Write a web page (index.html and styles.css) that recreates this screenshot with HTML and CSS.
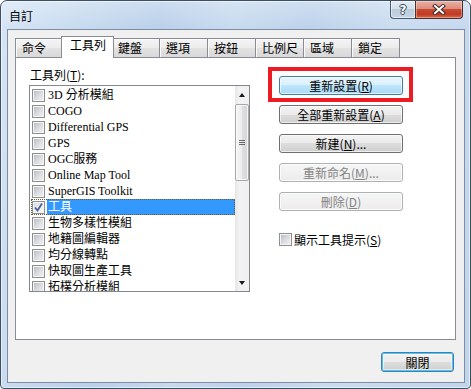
FILE: index.html
```html
<!DOCTYPE html>
<html lang="zh-Hant">
<head>
<meta charset="utf-8">
<title>自訂</title>
<link rel="stylesheet" href="styles.css">
</head>
<body>
<div class="window">
  <div class="titlebar">
    <span class="title">自訂</span>
    <div class="caption">
      <div class="cap-help"><span>?</span></div>
      <div class="cap-close">
        <svg width="14" height="11" viewBox="0 0 14 11"><path d="M3 2 L11 9 M11 2 L3 9" stroke="#3b2a28" stroke-width="4" stroke-linecap="square" fill="none"/><path d="M3 2 L11 9 M11 2 L3 9" stroke="#ffffff" stroke-width="2" stroke-linecap="square" fill="none"/></svg>
      </div>
    </div>
  </div>
  <div class="client">
    <div class="tabs">
      <div class="tab">命令</div>
      <div class="tab active">工具列</div>
      <div class="tab">鍵盤</div>
      <div class="tab">選項</div>
      <div class="tab">按鈕</div>
      <div class="tab">比例尺</div>
      <div class="tab">區域</div>
      <div class="tab">鎖定</div>
    </div>
    <div class="panel">
      <div class="leftcol">
        <div class="label">工具列(<u>T</u>):</div>
        <div class="listbox">
          <div class="items">
            <div class="row"><span class="cb"></span><span class="txt">3D 分析模組</span></div>
            <div class="row"><span class="cb"></span><span class="txt">COGO</span></div>
            <div class="row"><span class="cb"></span><span class="txt">Differential GPS</span></div>
            <div class="row"><span class="cb"></span><span class="txt">GPS</span></div>
            <div class="row"><span class="cb"></span><span class="txt">OGC服務</span></div>
            <div class="row"><span class="cb"></span><span class="txt">Online Map Tool</span></div>
            <div class="row"><span class="cb"></span><span class="txt">SuperGIS Toolkit</span></div>
            <div class="row selected"><span class="cb checked"><svg width="11" height="11" viewBox="0 0 11 11"><path d="M2 5.5 L4.5 8.5 L9 1.5" stroke="#4b5f99" stroke-width="1.8" fill="none"/></svg></span><span class="txt">工具</span></div>
            <div class="row"><span class="cb"></span><span class="txt">生物多樣性模組</span></div>
            <div class="row"><span class="cb"></span><span class="txt">地籍圖編輯器</span></div>
            <div class="row"><span class="cb"></span><span class="txt">均分線轉點</span></div>
            <div class="row"><span class="cb"></span><span class="txt">快取圖生產工具</span></div>
            <div class="row"><span class="cb"></span><span class="txt">拓樸分析模組</span></div>
          </div>
          <div class="scrollbar">
            <div class="sb-btn"><span class="arrow-up"></span></div>
            <div class="sb-track">
              <div class="thumb"><span class="grip"></span></div>
            </div>
            <div class="sb-btn"><span class="arrow-down"></span></div>
          </div>
        </div>
      </div>
      <div class="rightcol">
        <div class="hl-wrap">
          <button class="btn hot">重新設置(<u>R</u>)</button>
          <div class="redbox"></div>
        </div>
        <button class="btn">全部重新設置(<u>A</u>)</button>
        <button class="btn">新建(<u>N</u>)...</button>
        <button class="btn disabled">重新命名(<u>M</u>)...</button>
        <button class="btn disabled">刪除(<u>D</u>)</button>
        <div class="chkrow"><span class="cb"></span><span class="chktxt">顯示工具提示(<u>S</u>)</span></div>
      </div>
    </div>
    <div class="footer">
      <button class="btn default">關閉</button>
    </div>
  </div>
</div>
</body>
</html>
```
FILE: styles.css
```css
* { box-sizing: border-box; }
html, body { margin: 0; padding: 0; }
body {
  width: 471px;
  height: 389px;
  overflow: hidden;
  background: #ffffff;
  font-family: "Noto Sans CJK TC", "Noto Sans", sans-serif;
  font-size: 12px;
  color: #000;
}
u { text-decoration: underline; text-underline-offset: 1px; }

.window {
  width: 471px;
  height: 389px;
  border: 1px solid #3f4f63;
  border-radius: 7px 7px 4px 4px;
  overflow: hidden;
  display: flex;
  flex-direction: column;
  background:
    linear-gradient(to bottom, rgba(255,255,255,0.28) 0, rgba(255,255,255,0) 28px),
    linear-gradient(100deg, #d6e5f5 0%, #c8dbf0 14%, #b9d0ea 30%, #c7daef 44%, #bcd2eb 58%, #cadcf0 74%, #c0d5ed 100%);
  box-shadow: inset 0 0 0 1px rgba(255,255,255,0.55);
}

.titlebar {
  flex: none;
  height: 28px;
  display: flex;
  align-items: flex-start;
}
.title {
  padding: 8px 0 0 8px;
  line-height: 14px;
  font-size: 12px;
  color: #000;
}
.caption {
  margin-left: auto;
  margin-right: 7px;
  display: flex;
  height: 18px;
}
.cap-help {
  width: 25px;
  height: 18px;
  border: 1px solid #4c5c70;
  border-top: none;
  border-right: none;
  border-radius: 0 0 0 4px;
  background: linear-gradient(#e4ecf5 0%, #d3dfec 45%, #bccbdc 50%, #c6d5e5 100%);
  box-shadow: inset 0 0 0 1px rgba(255,255,255,0.5);
  display: flex;
  justify-content: center;
  align-items: center;
}
.cap-help span {
  font-family: "DejaVu Sans", sans-serif;
  font-weight: bold;
  font-size: 12px;
  line-height: 14px;
  color: #fff;
  text-shadow: 1px 0 0 #34445a, -1px 0 0 #34445a, 0 1px 0 #34445a, 0 -1px 0 #34445a;
}
.cap-close {
  width: 48px;
  height: 18px;
  border: 1px solid #4a2f2a;
  border-top: none;
  border-radius: 0 0 4px 0;
  background: linear-gradient(#eab0a2 0%, #de8d7b 45%, #c94a33 50%, #c13a22 78%, #d8694c 100%);
  box-shadow: inset 0 0 0 1px rgba(255,255,255,0.35);
  display: flex;
  justify-content: center;
  align-items: center;
}
.cap-close svg { display: block; }

.client {
  flex: none;
  height: 354px;
  margin: 0 5px 0 6px;
  border: 1px solid #7d8ea2;
  background: #f0f0f0;
  padding: 6px 8px 0 7px;
  display: flex;
  flex-direction: column;
}

.tabs {
  flex: none;
  height: 22px;
  display: flex;
  align-items: flex-end;
  margin-bottom: -1px;
  position: relative;
  z-index: 1;
}
.tab {
  width: 49px;
  height: 19px;
  margin-bottom: 1px;
  margin-left: -1px;
  border: 1px solid #898c95;
  border-bottom: none;
  background: linear-gradient(#f4f4f4 0%, #ececec 50%, #e2e2e2 50%, #d9d9d9 100%);
  box-shadow: inset 1px 1px 0 #fbfbfb;
  padding: 2px 0 0 6px;
  line-height: 14px;
  white-space: nowrap;
}
.tab:first-child { margin-left: 0; }
.tab.active {
  position: relative;
  z-index: 2;
  width: 53px;
  height: 22px;
  margin: 0 -2px 0 -3px;
  background: #ffffff;
  box-shadow: none;
  padding: 1px 0 0 8px;
}

.panel {
  flex: none;
  height: 283px;
  border: 1px solid #898c95;
  background: #ffffff;
  padding: 10px 0 0 13px;
  display: flex;
  align-items: flex-start;
}

.leftcol { width: 221px; flex: none; }
.label {
  padding-left: 1px;
  line-height: 14px;
  margin-bottom: 3px;
}
.listbox {
  width: 221px;
  height: 207px;
  border: 1px solid #828790;
  display: flex;
  overflow: hidden;
}
.items {
  flex: 1;
  padding-top: 1px;
  overflow: hidden;
}
.row {
  height: 16px;
  margin-left: 1px;
  padding-left: 1px;
  display: flex;
  align-items: flex-start;
  font-family: "Liberation Serif", "Noto Sans CJK TC", serif;
  font-size: 12px;
  line-height: 16px;
  white-space: nowrap;
}
.row .cb { margin-top: 2px; }
.row .txt {
  margin-left: 2px;
  padding-left: 1px;
  flex: 1;
}
.row.selected {
  outline: 1px dotted #6b5a3a;
  outline-offset: -1px;
}
.row.selected .txt {
  background: #3399ff;
  color: #ffffff;
}

.cb {
  flex: none;
  display: inline-flex;
  align-items: center;
  justify-content: center;
  width: 13px;
  height: 13px;
  border: 1px solid #8e8f8f;
  background: linear-gradient(135deg, #b4b9c0 0%, #dcdee1 55%, #f4f4f4 100%);
  box-shadow: inset 0 0 0 1px #f4f4f4;
}
.cb.checked {
  background: linear-gradient(135deg, #d5d8dc 0%, #eeeff0 55%, #fafafa 100%);
}
.cb svg { display: block; }

.scrollbar {
  width: 14px;
  flex: none;
  display: flex;
  flex-direction: column;
  background: linear-gradient(to right, #e6e6e6 0%, #f2f2f2 30%, #f0f0f0 100%);
}
.sb-btn {
  height: 17px;
  flex: none;
  display: flex;
  align-items: center;
  justify-content: center;
}
.arrow-up {
  width: 0; height: 0;
  border-left: 3.5px solid transparent;
  border-right: 3.5px solid transparent;
  border-bottom: 4px solid #1a1a1a;
}
.arrow-down {
  width: 0; height: 0;
  border-left: 3.5px solid transparent;
  border-right: 3.5px solid transparent;
  border-top: 4px solid #1a1a1a;
}
.sb-track { flex: 1; padding-top: 1px; }
.thumb {
  height: 77px;
  border: 1px solid #a7a7a7;
  border-radius: 2px;
  background: linear-gradient(to right, #f6f6f6 0%, #ececec 50%, #dedede 51%, #d6d6d6 100%);
  box-shadow: inset 0 0 0 1px rgba(255,255,255,0.7);
  display: flex;
  align-items: center;
  justify-content: center;
}
.grip {
  width: 6px;
  height: 5px;
  background: repeating-linear-gradient(to bottom, #6a6a6a 0, #6a6a6a 1px, transparent 1px, transparent 2px);
}

.rightcol {
  margin-left: 29px;
  padding-top: 8px;
  width: 124px;
  display: flex;
  flex-direction: column;
  gap: 10px;
}
.hl-wrap { position: relative; }
.redbox {
  position: absolute;
  left: -11px;
  top: -9px;
  width: 145px;
  height: 35px;
  border: 4px solid #ed1c24;
}

.btn {
  display: block;
  width: 124px;
  height: 19px;
  padding: 0;
  margin: 0;
  border: 1px solid #707070;
  border-radius: 3px;
  background: linear-gradient(#f2f2f2 0%, #ebebeb 50%, #dddddd 50%, #cfcfcf 100%);
  box-shadow: inset 0 0 0 1px rgba(255,255,255,0.65);
  font-family: "Noto Sans CJK TC", "Noto Sans", sans-serif;
  font-size: 12px;
  line-height: 16px;
  color: #000;
  text-align: center;
  white-space: nowrap;
}
.btn.hot {
  border-color: #3c7fb1;
  background: linear-gradient(#eaf6fd 0%, #d9f0fc 50%, #bee6fd 50%, #a7d9f5 100%);
}
.btn.disabled {
  border-color: #adb2b5;
  background: linear-gradient(#f6f6f6, #ececec);
  box-shadow: inset 0 0 0 1px #fbfbfb;
  color: #838383;
}
.btn.default {
  width: 73px;
  height: 20px;
  border-color: #3c7fb1;
  box-shadow: inset 0 0 0 1px #4fc4f5, inset 0 0 0 2px rgba(255,255,255,0.5);
  line-height: 17px;
}

.chkrow {
  margin-top: 12px;
  display: flex;
  align-items: center;
  height: 13px;
}
.chktxt {
  margin-left: 2px;
  line-height: 14px;
  white-space: nowrap;
}

.footer {
  flex: none;
  margin-top: 12px;
  display: flex;
  justify-content: flex-end;
  padding-right: 2px;
}
```
